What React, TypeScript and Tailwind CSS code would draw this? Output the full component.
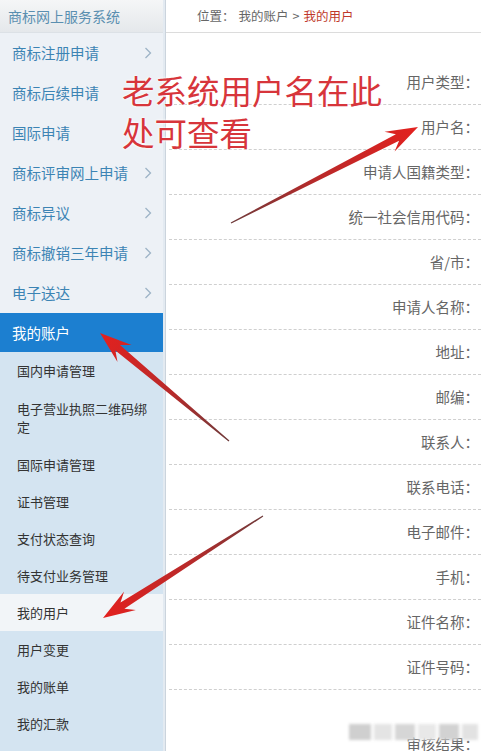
import React from 'react'

type Pt = [number, number]

// red annotation arrows: thin tail, swept-back head
function arrowPoints(tail: Pt, tip: Pt, headLen: number, headHalf: number, shaftHalf: number): string {
  const [tx, ty] = tail
  const [hx, hy] = tip
  const dx = hx - tx
  const dy = hy - ty
  const len = Math.hypot(dx, dy)
  const ux = dx / len
  const uy = dy / len
  const nx = -uy
  const ny = ux
  const bx = hx - headLen * ux
  const by = hy - headLen * uy
  const cx = hx - headLen * 0.72 * ux
  const cy = hy - headLen * 0.72 * uy
  const pts: Pt[] = [
    [hx, hy],
    [bx + headHalf * nx, by + headHalf * ny],
    [cx + shaftHalf * nx, cy + shaftHalf * ny],
    [tx + 0.6 * nx, ty + 0.6 * ny],
    [tx - 0.6 * nx, ty - 0.6 * ny],
    [cx - shaftHalf * nx, cy - shaftHalf * ny],
    [bx - headHalf * nx, by - headHalf * ny],
  ]
  return pts.map((p) => `${p[0].toFixed(1)},${p[1].toFixed(1)}`).join(' ')
}

const arrows: { id: string; tail: Pt; tip: Pt }[] = [
  { id: 'a1', tail: [231, 223], tip: [418, 127] },
  { id: 'a2', tail: [229, 441], tip: [100, 333] },
  { id: 'a3', tail: [263, 516], tip: [103, 618] },
]

const topMenu = [
  { label: '商标注册申请', arrow: true },
  { label: '商标后续申请', arrow: false },
  { label: '国际申请', arrow: false },
  { label: '商标评审网上申请', arrow: true },
  { label: '商标异议', arrow: true },
  { label: '商标撤销三年申请', arrow: true },
  { label: '电子送达', arrow: true },
]

const subMenu = [
  { label: '国内申请管理', h: 'h-[38px]' },
  { label: '电子营业执照二维码绑定', h: 'h-[56px]' },
  { label: '国际申请管理', h: 'h-[37px]' },
  { label: '证书管理', h: 'h-[37px]' },
  { label: '支付状态查询', h: 'h-[37px]' },
  { label: '待支付业务管理', h: 'h-[37px]' },
  { label: '我的用户', h: 'h-[37px]', active: true },
  { label: '用户变更', h: 'h-[37px]' },
  { label: '我的账单', h: 'h-[37px]' },
  { label: '我的汇款', h: 'h-[37px]' },
]

const fields = [
  '用户类型',
  '用户名',
  '申请人国籍类型',
  '统一社会信用代码',
  '省/市',
  '申请人名称',
  '地址',
  '邮编',
  '联系人',
  '联系电话',
  '电子邮件',
  '手机',
  '证件名称',
  '证件号码',
]

function Chevron() {
  return (
    <svg width="8" height="12" viewBox="0 0 8 12" className="shrink-0">
      <polyline points="1.5,1 6.5,6 1.5,11" fill="none" stroke="#9db3c6" strokeWidth="1.3" />
    </svg>
  )
}

export default function App() {
  return (
    <div className="relative flex w-[481px] h-[751px] overflow-hidden bg-white font-['Noto_Sans_CJK_SC','Noto_Sans',sans-serif]">
      {/* Sidebar */}
      <aside className="flex flex-col w-[163px] shrink-0 bg-[#edf1f6]">
        <div className="h-[33px] shrink-0 flex items-center pl-2 bg-gradient-to-b from-[#f5f6f7] to-[#e5e8eb] border-b border-[#dce1e6]">
          <span className="text-[14px] text-[#5a8fb0]">商标网上服务系统</span>
        </div>
        {topMenu.map((m) => (
          <div key={m.label} className="h-[40px] shrink-0 flex items-center justify-between pl-3 pr-[11px]">
            <span className="text-[14.5px] text-[#3c84b4]">{m.label}</span>
            {m.arrow && <Chevron />}
          </div>
        ))}
        <div className="h-[39px] shrink-0 flex items-center pl-3 bg-[#1c7fd0]">
          <span className="text-[14.5px] text-white">我的账户</span>
        </div>
        <div className="flex flex-col flex-1 bg-[#d4e4f1]">
          {subMenu.map((s) => (
            <div
              key={s.label}
              className={`${s.h} shrink-0 flex items-center pl-[17px] pr-3 ${s.active ? 'bg-[#f2f5f8]' : ''}`}
            >
              <span className="text-[13px] leading-[18px] text-[#333]">{s.label}</span>
            </div>
          ))}
        </div>
      </aside>
      <div className="w-[3px] shrink-0 bg-[#e3eaf1] border-r border-[#cbd4dd]" />

      {/* Content */}
      <main className="flex flex-col flex-1 min-w-0">
        <div className="h-[33px] shrink-0 flex items-center pl-[31px] border-b border-[#dcdcdc] text-[12.5px]">
          <span className="text-[#666]">位置：</span>
          <span className="ml-[4px] text-[#666]">我的账户</span>
          <span className="mx-[4px] text-[#666]">&gt;</span>
          <span className="text-[#c0392b]">我的用户</span>
        </div>
        <div className="flex flex-col mt-[27px] pl-[3px]">
          {fields.map((f) => (
            <div
              key={f}
              className="h-[45px] shrink-0 flex items-center justify-end pr-[2px] border-b border-dashed border-[#cfcfcf]"
            >
              <span className="text-[14.5px] text-[#666]">{f}：</span>
            </div>
          ))}
          <div className="h-[108px] shrink-0 flex items-center justify-end pr-[2px]">
            <span className="text-[14.5px] text-[#666]">审核结果：</span>
          </div>
        </div>
      </main>

      {/* Blurred watermark */}
      <div className="absolute left-[349px] top-[724px] flex gap-[3px] blur-[1.5px]">
        <div className="w-[22px] h-[16px] bg-[#cfcfcf]" />
        <div className="w-[18px] h-[16px] bg-[#e4e4e4]" />
        <div className="w-[20px] h-[16px] bg-[#d6d6d6]" />
        <div className="w-[18px] h-[16px] bg-[#e8e8e8]" />
        <div className="w-[20px] h-[16px] bg-[#d2d2d2]" />
        <div className="w-[16px] h-[16px] bg-[#e2e2e2]" />
      </div>

      {/* Annotation text */}
      <div className="absolute left-[122px] top-[69px] text-[32.5px] leading-[42px] text-[#d7353b] [text-shadow:0_0_2px_#fff,0_0_3px_#fff]">
        <div>老系统用户名在此</div>
        <div>处可查看</div>
      </div>

      {/* Annotation arrows */}
      <svg className="absolute inset-0 pointer-events-none" width="481" height="751" viewBox="0 0 481 751">
        <defs>
          {arrows.map((a) => (
            <linearGradient
              key={a.id}
              id={a.id}
              gradientUnits="userSpaceOnUse"
              x1={a.tail[0]}
              y1={a.tail[1]}
              x2={a.tip[0]}
              y2={a.tip[1]}
            >
              <stop offset="0" stopColor="#6e3a3a" />
              <stop offset="0.45" stopColor="#b82a2a" />
              <stop offset="1" stopColor="#e3211f" />
            </linearGradient>
          ))}
        </defs>
        {arrows.map((a) => (
          <polygon key={a.id} points={arrowPoints(a.tail, a.tip, 32, 11, 3.6)} fill={`url(#${a.id})`} />
        ))}
      </svg>
    </div>
  )
}
